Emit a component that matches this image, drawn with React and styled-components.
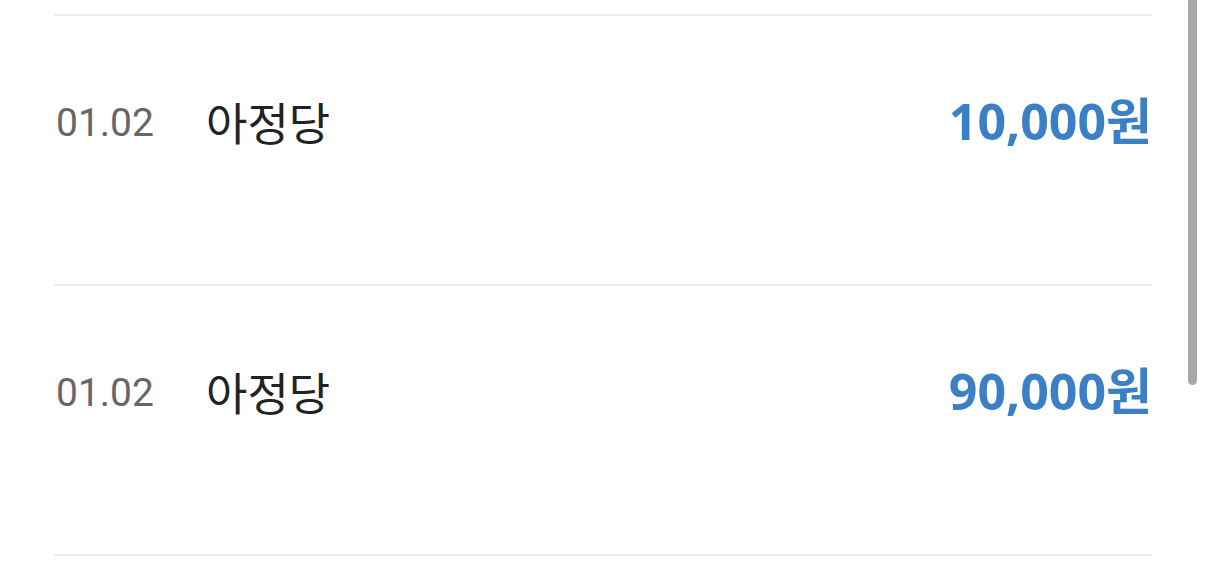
import styled, { createGlobalStyle } from 'styled-components'

const GlobalStyle = createGlobalStyle`
  html, body {
    margin: 0;
    padding: 0;
    background: #fff;
    overflow: hidden;
  }
  body {
    font-family: Roboto, "Noto Sans CJK KR", sans-serif;
  }
`

const items = [
  { date: '01.02', name: '아정당', amount: '10,000원' },
  { date: '01.02', name: '아정당', amount: '90,000원' },
]

export default function App() {
  return (
    <Page>
      <GlobalStyle />
      <List>
        {items.map((item, i) => (
          <Row key={i}>
            <DateText>{item.date}</DateText>
            <Name>{item.name}</Name>
            <Amount>{item.amount}</Amount>
          </Row>
        ))}
      </List>
      <ScrollThumb />
    </Page>
  )
}

const Page = styled.div`
  position: relative;
  width: 1206px;
  height: 577px;
  padding-top: 14px;
  box-sizing: border-box;
`

const List = styled.div`
  margin: 0 54px;
  border-top: 2px solid #ececec;
`

const Row = styled.div`
  display: flex;
  align-items: center;
  height: 270px;
  padding-bottom: 54px;
  box-sizing: border-box;
  border-bottom: 2px solid #ececec;
  padding-left: 2px;
`

const DateText = styled.span`
  font-family: Roboto, sans-serif;
  font-size: 39px;
  color: #666;
  width: 150px;
`

const Name = styled.span`
  font-family: "Noto Sans CJK KR", sans-serif;
  font-size: 45px;
  color: #222;
  flex: 1;
  margin-bottom: 4px;
`

const Amount = styled.span`
  font-family: "Open Sans", "Noto Sans CJK KR", sans-serif;
  font-weight: 700;
  font-size: 50px;
  color: #3b80c4;
  margin-bottom: 10px;
`

const ScrollThumb = styled.div`
  position: absolute;
  top: 0;
  right: 9px;
  width: 9px;
  height: 385px;
  background: #a8a8a8;
  border-radius: 0 0 5px 5px;
`
